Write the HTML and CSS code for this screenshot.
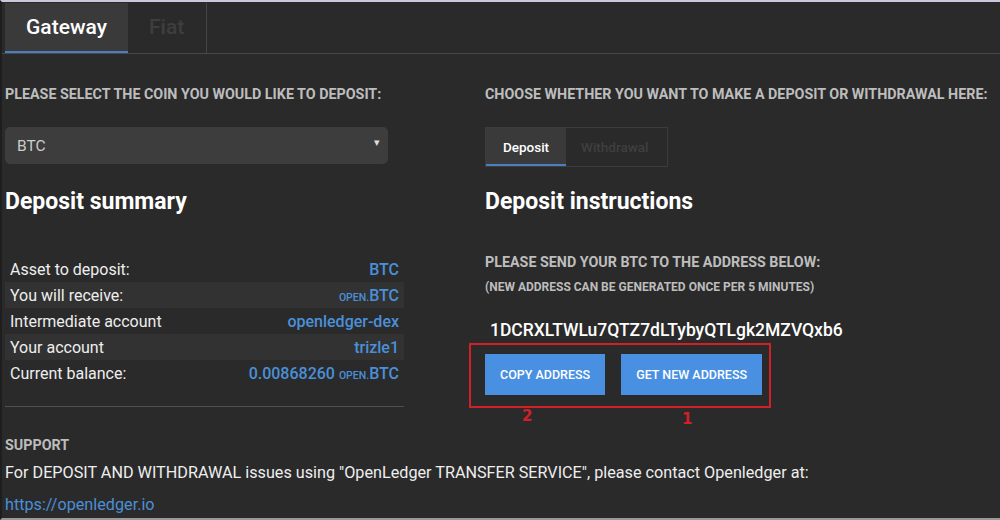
FILE: index.html
```html
<!DOCTYPE html>
<html lang="en">
<head>
<meta charset="UTF-8">
<meta name="viewport" content="width=device-width, initial-scale=1.0">
<title>Gateway Deposit</title>
<link rel="stylesheet" href="styles.css">
</head>
<body>
<div class="tab-bar">
    <div class="tab active">Gateway</div>
    <div class="tab">Fiat</div>
</div>

<div class="content">
    <div class="field-label">Please select the coin you would like to deposit:</div>
    <div class="field-label">Choose whether you want to make a deposit or withdrawal here:</div>

    <div class="coin-select">
        <span>BTC</span>
        <span class="caret">&#9662;</span>
    </div>
    <div class="mode-toggle">
        <div class="mode active">Deposit</div>
        <div class="mode">Withdrawal</div>
    </div>

    <h2>Deposit summary</h2>
    <h2>Deposit instructions</h2>

    <div class="summary">
        <table>
            <tr><td>Asset to deposit:</td><td class="value">BTC</td></tr>
            <tr><td>You will receive:</td><td class="value"><span class="prefix">open.</span>BTC</td></tr>
            <tr><td>Intermediate account</td><td class="value">openledger-dex</td></tr>
            <tr><td>Your account</td><td class="value">trizle1</td></tr>
            <tr><td>Current balance:</td><td class="value">0.00868260 <span class="prefix">open.</span>BTC</td></tr>
        </table>
        <hr>
    </div>

    <div class="instructions">
        <div class="field-label">Please send your BTC to the address below:</div>
        <div class="note">(New address can be generated once per 5 minutes)</div>
        <div class="address">1DCRXLTWLu7QTZ7dLTybyQTLgk2MZVQxb6</div>
        <div class="buttons">
            <button class="btn">Copy address</button>
            <button class="btn">Get new address</button>
        </div>
        <!-- annotation marks -->
        <div class="mark-box"></div>
        <span class="mark mark-2">2</span>
        <span class="mark mark-1">1</span>
    </div>
</div>

<div class="support">
    <div class="field-label">Support</div>
    <p>For DEPOSIT AND WITHDRAWAL issues using "OpenLedger TRANSFER SERVICE", please contact Openledger at:</p>
    <a href="#">https://openledger.io</a>
</div>
</body>
</html>
```

FILE: styles.css
```css
html, body {
    height: 100%;
}

body {
    font-family: Roboto, "Liberation Sans", sans-serif;
    margin: 0;
    padding: 0;
    background-color: #2a2a2a;
    color: #eee;
    box-sizing: border-box;
    border-top: 2px solid #c9c9dc;
    border-bottom: 2px solid #9a9a9a;
    border-left: 2px solid #1e1e1e;
    overflow: hidden;
}

.tab-bar {
    display: flex;
    padding: 1px 0 0 3px;
    border-bottom: 1px solid #484848;
}

.tab {
    height: 50px;
    line-height: 48px;
    padding: 0 21px;
    font-size: 21px;
    font-weight: 500;
    color: #3e3e3e;
    border-right: 1px solid #444;
    box-sizing: border-box;
}

.tab.active {
    width: 123px;
    text-align: center;
    padding: 0;
    background-color: #3a3a3a;
    color: #fff;
    border-bottom: 2px solid #4a7fc0;
    border-right: none;
}

.tab + .tab {
    width: 79px;
}

.content {
    display: grid;
    grid-template-columns: 399px 1fr;
    column-gap: 81px;
    padding: 32px 0 0 3px;
    align-items: start;
}

.field-label {
    font-size: 14.3px;
    font-weight: 700;
    line-height: 16px;
    text-transform: uppercase;
    color: #bdbdbd;
}

.coin-select {
    margin-top: 25px;
    width: 383px;
    height: 37px;
    box-sizing: border-box;
    padding: 0 8px 0 12px;
    background-color: #3d3d3d;
    border-radius: 5px;
    display: flex;
    align-items: center;
    justify-content: space-between;
    font-size: 15.5px;
    color: #ccc;
}

.caret {
    font-size: 11px;
    color: #ddd;
    margin-top: -6px;
}

.mode-toggle {
    margin-top: 25px;
    display: flex;
    width: 183px;
    height: 40px;
    box-sizing: border-box;
    border: 1px solid #3c3c3c;
}

.mode {
    line-height: 38px;
    padding: 0 15px;
    font-size: 13.5px;
    font-weight: 500;
    color: #3f3f3f;
}

.mode.active {
    width: 80px;
    box-sizing: border-box;
    text-align: center;
    padding: 0;
    background-color: #3a3a3a;
    color: #fff;
    border-bottom: 2px solid #4a7fc0;
}

h2 {
    margin: 21px 0 0;
    font-size: 23px;
    font-weight: 700;
    line-height: 28px;
    color: #fff;
}

.summary {
    margin-top: 40px;
}

table {
    width: 100%;
    border-collapse: collapse;
    font-size: 16px;
}

td {
    height: 26px;
    padding: 0 5px;
    color: #eee;
}

tr:nth-child(even) td {
    background-color: #323232;
}

td.value {
    text-align: right;
    color: #4a90d9;
    font-weight: 500;
}

.prefix {
    font-size: 10.5px;
    text-transform: uppercase;
}

hr {
    margin: 20px 0 0;
    border: none;
    border-top: 1px solid #505050;
}

.instructions {
    position: relative;
    margin-top: 38px;
}

.note {
    margin-top: 10px;
    font-size: 12px;
    font-weight: 700;
    line-height: 14px;
    text-transform: uppercase;
    color: #bdbdbd;
}

.address {
    margin: 25px 0 0 5px;
    font-size: 17.5px;
    font-weight: 500;
    line-height: 22px;
    color: #fff;
}

.buttons {
    display: flex;
    gap: 16px;
    margin-top: 13px;
}

.btn {
    height: 41px;
    padding: 0 15px;
    border: none;
    background-color: #4a90e2;
    color: #fff;
    font-family: inherit;
    font-size: 12.5px;
    font-weight: 500;
    text-transform: uppercase;
}

.mark-box {
    position: absolute;
    left: -16px;
    top: 89px;
    width: 302px;
    height: 65px;
    box-sizing: border-box;
    border: 2px solid #d0202a;
}

.mark {
    position: absolute;
    font-family: "DejaVu Sans", sans-serif;
    font-size: 15px;
    font-weight: 700;
    color: #d0202a;
}

.mark-2 {
    left: 37px;
    top: 153px;
}

.mark-1 {
    left: 197px;
    top: 156px;
}

.support {
    margin-top: 30px;
    padding-left: 3px;
}

.support p {
    margin: 10px 0 0;
    font-size: 16.2px;
    line-height: 20px;
    color: #eee;
}

.support a {
    display: block;
    margin-top: 12px;
    font-size: 16.2px;
    line-height: 20px;
    color: #4a8fd8;
    text-decoration: none;
}
```
